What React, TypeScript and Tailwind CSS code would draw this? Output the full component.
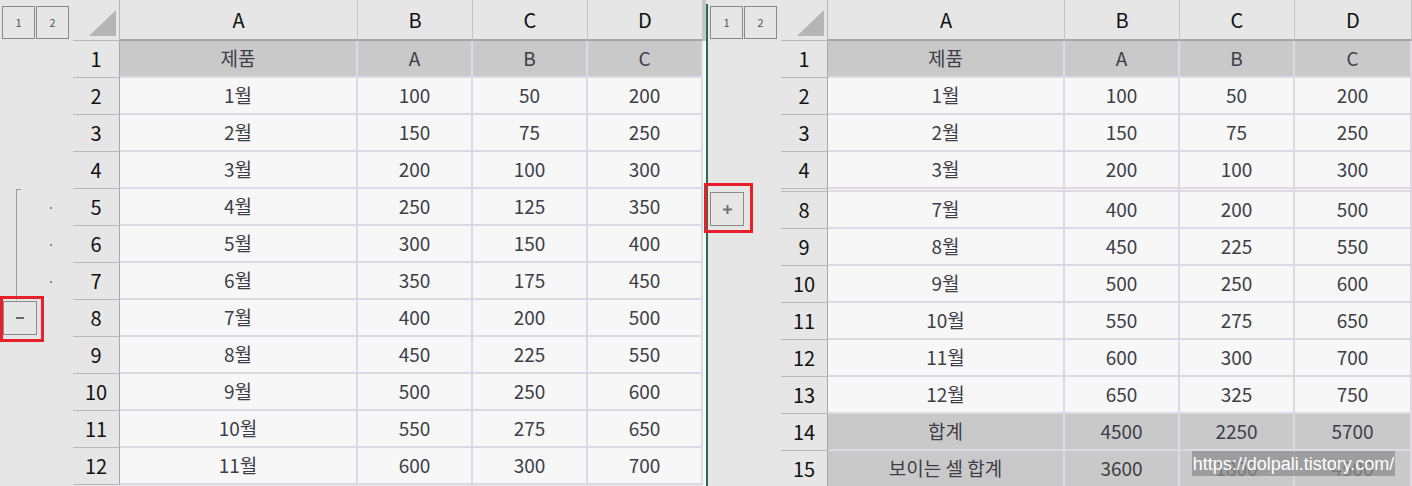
import React from "react";

type Row = { n: string; cells: string[]; kind: "head" | "data" | "total" | "gap" };

const leftRows: Row[] = [
  { n: "1", cells: ["제품", "A", "B", "C"], kind: "head" },
  { n: "2", cells: ["1월", "100", "50", "200"], kind: "data" },
  { n: "3", cells: ["2월", "150", "75", "250"], kind: "data" },
  { n: "4", cells: ["3월", "200", "100", "300"], kind: "data" },
  { n: "5", cells: ["4월", "250", "125", "350"], kind: "data" },
  { n: "6", cells: ["5월", "300", "150", "400"], kind: "data" },
  { n: "7", cells: ["6월", "350", "175", "450"], kind: "data" },
  { n: "8", cells: ["7월", "400", "200", "500"], kind: "data" },
  { n: "9", cells: ["8월", "450", "225", "550"], kind: "data" },
  { n: "10", cells: ["9월", "500", "250", "600"], kind: "data" },
  { n: "11", cells: ["10월", "550", "275", "650"], kind: "data" },
  { n: "12", cells: ["11월", "600", "300", "700"], kind: "data" },
];

const rightRows: Row[] = [
  { n: "1", cells: ["제품", "A", "B", "C"], kind: "head" },
  { n: "2", cells: ["1월", "100", "50", "200"], kind: "data" },
  { n: "3", cells: ["2월", "150", "75", "250"], kind: "data" },
  { n: "4", cells: ["3월", "200", "100", "300"], kind: "data" },
  { n: "", cells: ["", "", "", ""], kind: "gap" },
  { n: "8", cells: ["7월", "400", "200", "500"], kind: "data" },
  { n: "9", cells: ["8월", "450", "225", "550"], kind: "data" },
  { n: "10", cells: ["9월", "500", "250", "600"], kind: "data" },
  { n: "11", cells: ["10월", "550", "275", "650"], kind: "data" },
  { n: "12", cells: ["11월", "600", "300", "700"], kind: "data" },
  { n: "13", cells: ["12월", "650", "325", "750"], kind: "data" },
  { n: "14", cells: ["합계", "4500", "2250", "5700"], kind: "total" },
  { n: "15", cells: ["보이는 셀 합계", "3600", "1800", "4500"], kind: "total" },
];

function LevelButtons() {
  return (
    <div className="flex gap-[1px] pl-[2px] pt-[6px]">
      <div className="w-[33px] h-[33px] border border-[#8a8a8a] flex items-center justify-center text-[11px] text-[#555]">1</div>
      <div className="w-[33px] h-[33px] border border-[#8a8a8a] flex items-center justify-center text-[11px] text-[#555]">2</div>
    </div>
  );
}

function Corner() {
  return (
    <div className="w-[47px] h-full border-r border-b border-[#b8b8b8] flex items-end justify-end pr-[3px] pb-[4px]">
      <svg width="27" height="26" viewBox="0 0 27 26">
        <polygon points="27,0 27,26 0,26" fill="#b5b5b5" />
      </svg>
    </div>
  );
}

function OutlineLeft({ n }: { n: string }) {
  if (n === "5" || n === "6" || n === "7") {
    return (
      <div className="w-[73px] h-full flex">
        <div className={"ml-[16px] w-[5px] h-full border-l border-[#9a9a9a] " + (n === "5" ? "border-t" : "")} />
        <div className="flex-1 flex items-center">
          <div className="ml-[29px] w-[2px] h-[2px] bg-[#8a8a8a]" />
        </div>
      </div>
    );
  }
  if (n === "8") {
    return (
      <div className="relative w-[73px] h-full">
        <div className="ml-[3px] mt-[1px] w-[34px] h-[34px] border border-[#8a8a8a] flex items-center justify-center">
          <div className="w-[8px] h-[2px] bg-[#6a6a6a]" />
        </div>
        <div className="absolute left-0 top-[-5px] w-[44px] h-[46px] border-[3px] border-[#e8202a] z-10" />
      </div>
    );
  }
  return <div className="w-[73px] h-full" />;
}

function OutlineRight({ n }: { n: string }) {
  if (n === "8") {
    return (
      <div className="relative w-[73px] h-full">
        <div className="ml-[2px] w-[34px] h-[34px] border border-[#8a8a8a] flex items-center justify-center">
          <svg width="9" height="9" viewBox="0 0 9 9">
            <rect x="0" y="3.5" width="9" height="2" fill="#707070" />
            <rect x="3.5" y="0" width="2" height="9" fill="#707070" />
          </svg>
        </div>
        <div className="absolute left-[-4px] top-[-9px] w-[49px] h-[50px] border-[3px] border-[#e8202a] z-10" />
      </div>
    );
  }
  return <div className="w-[73px] h-full" />;
}

function Sheet({ rows, widths, side }: { rows: Row[]; widths: string[]; side: "l" | "r" }) {
  return (
    <div className="flex flex-col">
      <div className="flex h-[41px] bg-[#e6e6e6]">
        <div className="w-[73px] h-full">
          <LevelButtons />
        </div>
        <Corner />
        {["A", "B", "C", "D"].map((c, i) => (
          <div
            key={c}
            className={widths[i] + " h-full border-r border-b-2 border-r-[#c4c4c4] border-b-[#a6a6a6] flex items-center justify-center text-[20px] text-[#111]"}
          >
            {c}
          </div>
        ))}
      </div>
      {rows.map((r, ri) => {
        const isGap = r.kind === "gap";
        const bg = r.kind === "data" || isGap ? "bg-[#f7f7f7]" : "bg-[#c9c9c9]";
        return (
          <div key={ri} className={"flex " + (isGap ? "h-[3px]" : "h-[37px]")}>
            <div className="bg-[#e6e6e6] h-full">
              {isGap ? <div className="w-[73px]" /> : side === "l" ? <OutlineLeft n={r.n} /> : <OutlineRight n={r.n} />}
            </div>
            <div className="w-[47px] h-full bg-[#e6e6e6] border-r border-b border-r-[#a8a8a8] border-b-[#b9b9b9] flex items-center justify-center text-[20px] text-[#111]">
              {r.n}
            </div>
            {r.cells.map((c, ci) => (
              <div
                key={ci}
                className={widths[ci] + " h-full " + bg + " border-r-2 border-b-2 border-[#dcd9e3] flex items-center justify-center text-[19px] text-[#3e3e48]"}
              >
                {c}
              </div>
            ))}
          </div>
        );
      })}
    </div>
  );
}

export default function App() {
  return (
    <div className="relative w-[1412px] h-[486px] overflow-hidden bg-[#e6e6e6] font-['Noto_Sans_CJK_KR',sans-serif]">
      <div className="flex">
        <Sheet rows={leftRows} widths={["w-[238px]", "w-[115px]", "w-[115px]", "w-[115px]"]} side="l" />
        <div className="w-[3px] flex flex-col">
          <div className="h-[41px] bg-[#c6c6c6]" />
          <div className="h-[445px] bg-[#fafafa]" />
        </div>
        <div className="w-[2px] flex flex-col">
          <div className="h-[4px] bg-[#e6e6e6]" />
          <div className="h-[482px] bg-[#217346]" />
        </div>
        <Sheet rows={rightRows} widths={["w-[237px]", "w-[115px]", "w-[115px]", "w-[117px]"]} side="r" />
      </div>
      <div className="absolute left-[1192px] top-[451px] w-[203px] h-[25px] bg-[#8e8e8e]/75 flex items-center justify-center text-[18px] leading-none text-white font-['Liberation_Sans',sans-serif] whitespace-nowrap">
        https://dolpali.tistory.com/
      </div>
    </div>
  );
}
